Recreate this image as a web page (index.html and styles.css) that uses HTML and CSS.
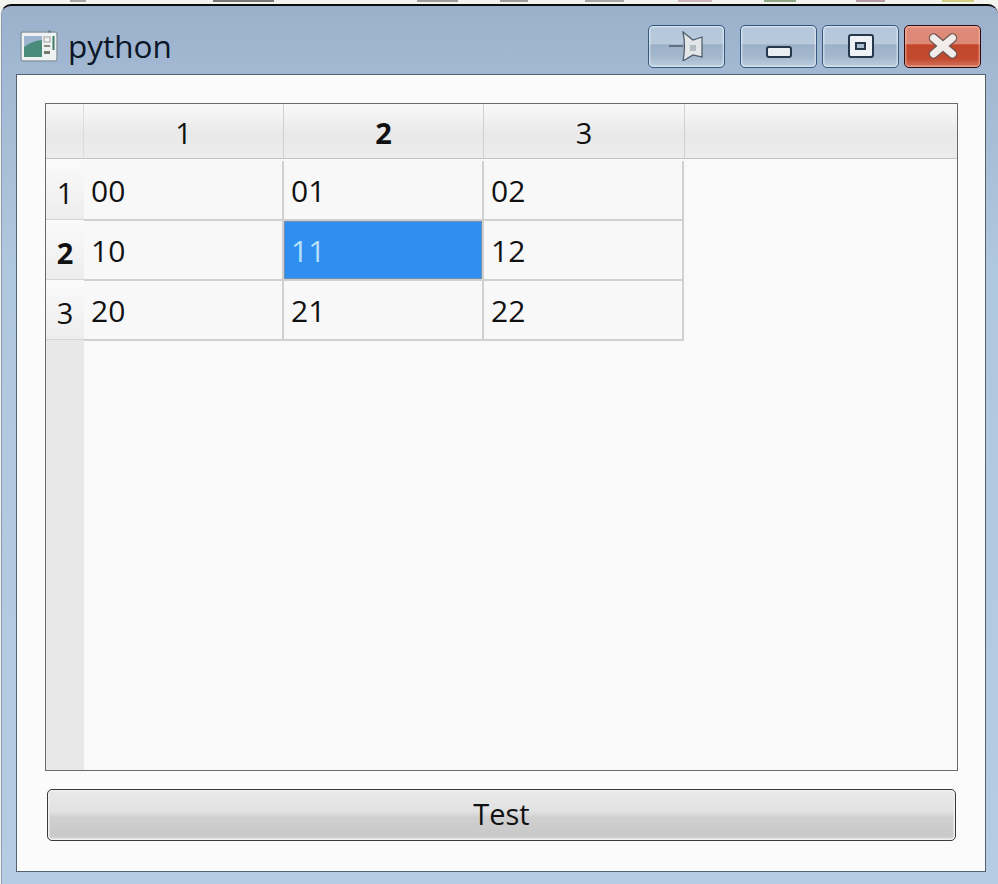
FILE: index.html
```html
<!DOCTYPE html>
<html lang="en">
<head>
<meta charset="utf-8">
<title>python</title>
<link rel="stylesheet" href="styles.css">
</head>
<body>
<div class="window">
  <header class="titlebar">
    <svg class="app-icon" width="38" height="33" viewBox="0 0 38 33">
      <rect x="1" y="2" width="36" height="29" rx="2" fill="#eef2f2" stroke="#8a9aa8" stroke-width="1.5"/>
      <rect x="4" y="6" width="18" height="21" fill="#4a8c7c"/>
      <path d="M4 6h18v4q-10 1-18 7z" fill="#9db5cf"/>
      <rect x="24" y="7" width="6" height="5" fill="none" stroke="#a0a0a0"/>
      <rect x="24" y="15" width="6" height="2" fill="#8a8a7a"/>
      <rect x="24" y="21" width="6" height="3" fill="#77776a"/>
      <rect x="32.500" y="6" width="2" height="14" fill="#3d7a63"/>
      <rect x="28" y="0.500" width="3" height="2" fill="#6d7c8a"/>
    </svg>
    <span class="title">python</span>
    <div class="controls">
      <button class="cap cap-pin" type="button" aria-label="Pin">
        <svg width="40" height="30" viewBox="-2 0 40 30">
          <path d="M0 15h14" stroke="#4f5a68" stroke-width="1.500"/>
          <path d="M14 1l10 8 9 -3v20l-9 -2 -10 6q3 -15 0 -29z" fill="#e2e6e9" stroke="#4c5866" stroke-width="1.200"/>
          <rect x="21" y="14" width="6" height="6" fill="#b3bbc3"/>
        </svg>
      </button>
      <div class="cap-group">
        <button class="cap" type="button" aria-label="Minimize"><span class="min-glyph"></span></button>
        <button class="cap" type="button" aria-label="Maximize"><span class="max-glyph"></span></button>
        <button class="cap cap-close" type="button" aria-label="Close">
          <svg width="30" height="26" viewBox="0 0 30 26">
            <path d="M5.500 5l19 16M24.500 5l-19 16" stroke="#6e5350" stroke-width="9.500" stroke-linecap="round"/>
            <path d="M5.500 5l19 16M24.500 5l-19 16" stroke="#f1ece9" stroke-width="7" stroke-linecap="round"/>
          </svg>
        </button>
      </div>
    </div>
  </header>
  <main class="client">
    <div class="table">
      <div class="hrow">
        <div class="corner"></div>
        <div class="hcell">1</div>
        <div class="hcell bold">2</div>
        <div class="hcell">3</div>
        <div class="hfill"></div>
      </div>
      <div class="tbody">
        <div class="vhead">
          <div class="vcell">1</div>
          <div class="vcell bold">2</div>
          <div class="vcell">3</div>
          <div class="vfill"></div>
        </div>
        <div class="grid">
          <div class="cell">00</div><div class="cell">01</div><div class="cell">02</div>
          <div class="cell">10</div><div class="cell selected">11</div><div class="cell">12</div>
          <div class="cell">20</div><div class="cell">21</div><div class="cell">22</div>
        </div>
      </div>
    </div>
    <button class="test" type="button">Test</button>
  </main>
</div>
</body>
</html>
```
FILE: styles.css
```css
* { box-sizing: border-box; }
html, body { margin: 0; height: 884px; overflow: hidden; }
body {
  padding-top: 4px;
  font-family: "Open Sans", "Noto Sans", sans-serif;
  color: #111;
  background-color: #f4f4ee;
  background-image: linear-gradient(to right,
    transparent 70px, #a8a8a0 70px, #a8a8a0 86px, transparent 86px,
    transparent 213px, #77776f 213px, #77776f 274px, transparent 274px,
    transparent 417px, #a0a098 417px, #a0a098 458px, transparent 458px,
    transparent 500px, #a0a098 500px, #a0a098 528px, transparent 528px,
    transparent 585px, #a8a8a0 585px, #a8a8a0 624px, transparent 624px,
    transparent 678px, #d0b8b8 678px, #d0b8b8 712px, transparent 712px,
    transparent 764px, #93a884 764px, #93a884 796px, transparent 796px,
    transparent 856px, #b89aa8 856px, #b89aa8 885px, transparent 885px,
    transparent 942px, #d4ce80 942px, #d4ce80 974px, transparent 974px);
  background-size: 100% 2px;
  background-repeat: no-repeat;
}
.window {
  height: 880px;
  margin-left: 1px;
  border: 1px solid #46525e;
  border-top: 2px solid #0c0c0c;
  border-left-color: #8a9cb0;
  border-right: 0;
  border-bottom: 0;
  border-radius: 10px 10px 0 0;
  padding: 0 12px 12px 14px;
  background: linear-gradient(#9bb0ca 0, #a3b8d2 70px, #b0c7e0 260px, #b6cce4 100%);
  display: flex;
  flex-direction: column;
}
.titlebar {
  height: 68px;
  flex: none;
  display: flex;
  align-items: center;
  padding: 12px 4px 0 4px;
}
.app-icon { flex: none; }
.title {
  margin-left: 10px;
  font-size: 31.500px;
  line-height: 40px;
  color: #0b1626;
}
.controls {
  margin-left: auto;
  display: flex;
  gap: 15px;
  margin-right: 1px;
}
.cap-group { display: flex; gap: 5px; }
.cap {
  width: 77px;
  height: 43px;
  padding: 0;
  border: 1.500px solid #36597c;
  border-radius: 5px;
  box-shadow: inset 0 0 0 1.500px rgba(235,243,250,.55);
  background: linear-gradient(#b4c7db 0, #b9cadc 43%, #9cb1c8 46%, #a4b8cd 75%, #bccfe0 100%);
  display: flex;
  align-items: center;
  justify-content: center;
}
.cap-close {
  border-color: #2a0c12;
  box-shadow: inset 0 0 0 1.500px rgba(250,190,170,.55);
  background: linear-gradient(#e08a78 0, #dc8a78 43%, #c3452a 46%, #c24a2f 80%, #d3765f 100%);
}
.min-glyph {
  width: 26px;
  height: 12px;
  margin-top: 11px;
  border: 2px solid #26384c;
  border-radius: 3px;
  background: #e9eef3;
}
.max-glyph {
  width: 26px;
  height: 24px;
  border: 2px solid #26384c;
  border-radius: 3px;
  background: #eef2f6;
  display: flex;
  align-items: center;
  justify-content: center;
}
.max-glyph::before {
  content: "";
  box-sizing: border-box;
  width: 11px;
  height: 8px;
  border: 2px solid #26384c;
  background: #a9bbcd;
}
.client {
  flex: 1;
  min-height: 0;
  background: #fbfbfb;
  border: 1px solid #55616d;
  padding: 28px 27px 29px 28px;
  display: flex;
  flex-direction: column;
}
.table {
  height: 668px;
  flex: none;
  border: 1px solid #6a6a6a;
  background: #f9f9f9;
  display: flex;
  flex-direction: column;
}
.hrow {
  height: 55px;
  flex: none;
  display: flex;
  border-bottom: 1px solid #c4c4c4;
  background: linear-gradient(#f9f9f9, #e9e9e9 55%, #ebeced);
}
.corner { width: 38px; border-right: 1px solid #dcdcdc; }
.hcell {
  width: 200px;
  border-right: 1px solid #d0d0d0;
  font-size: 29px;
  line-height: 58px;
  text-align: center;
}
.hcell:nth-child(4) { width: 201px; }
.hfill { flex: 1; }
.bold { font-weight: 700; }
.tbody { flex: 1; min-height: 0; display: flex; padding-top: 1px; }
.vhead { width: 38px; flex: none; display: flex; flex-direction: column; }
.vcell {
  height: 60px;
  flex: none;
  font-size: 29px;
  line-height: 65px;
  text-align: center;
  background: linear-gradient(#fafafa, #ededed);
  border-bottom: 1px solid #d4d4d4;
}
.vfill { flex: 1; background: #e8e8e8; }
.grid {
  display: grid;
  grid-template-columns: repeat(3, 200px);
  grid-auto-rows: 60px;
  align-self: flex-start;
  margin-top: 1px;
}
.cell {
  border-right: 2px solid #d0d0d0;
  border-bottom: 2px solid #d0d0d0;
  background: #f8f8f8;
  font-size: 30px;
  line-height: 60px;
  padding-left: 7px;
  color: #111;
}
.cell.selected {
  background: #2f8ff0;
  color: #b8e0fb;
  box-shadow: inset 0 0 0 1px #6f8fae;
}
.test {
  margin: 18px 2px 0 2px;
  height: 52px;
  flex: none;
  border: 1.500px solid #3a3a3a;
  border-radius: 5px;
  background: linear-gradient(#e9e9e9 0, #e2e2e2 42%, #cfcfcf 56%, #c9c9c9 92%, #dcdcdc 100%);
  box-shadow: inset 0 0 0 1.500px #f0f0f0;
  font-family: inherit;
  font-size: 29px;
  color: #111;
  padding: 0 0 3px;
}
```
